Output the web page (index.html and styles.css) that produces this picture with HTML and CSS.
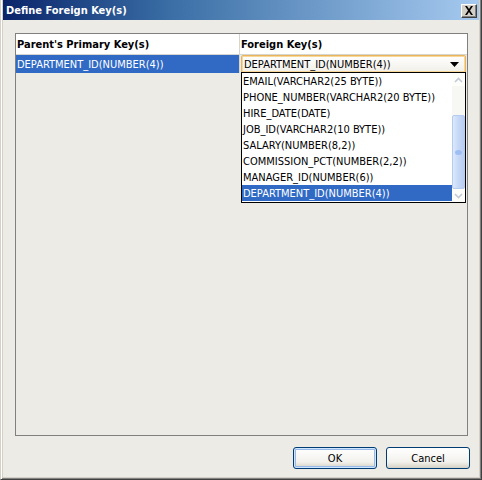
FILE: index.html
```html
<!DOCTYPE html>
<html>
<head>
<meta charset="utf-8">
<link rel="stylesheet" href="styles.css">
</head>
<body>
<div class="window">
  <div class="titlebar">
    <span class="title">Define Foreign Key(s)</span>
    <span class="close-btn"><svg width="10" height="9" viewBox="0 0 10 9"><path d="M1 0h2l2 3 2-3h2L6 4.5 9 9H7L5 6 3 9H1l3-4.5z" fill="#000"/></svg></span>
  </div>
  <div class="client">
    <div class="panel">
      <div class="grid-header">
        <div class="hcell c1">Parent's Primary Key(s)</div>
        <div class="hcell c2">Foreign Key(s)</div>
      </div>
      <div class="grid-row">
        <div class="cell c1 selected">DEPARTMENT_ID(NUMBER(4))</div>
        <div class="cell c2">
          <div class="combo">
            <span class="combo-text">DEPARTMENT_ID(NUMBER(4))</span>
            <svg class="combo-arrow" width="9" height="5" viewBox="0 0 9 5"><path d="M0 0h9L4.5 5z" fill="#000"/></svg>
          </div>
        </div>
      </div>
      <div class="dropdown">
        <ul class="items">
          <li>EMAIL(VARCHAR2(25 BYTE))</li>
          <li>PHONE_NUMBER(VARCHAR2(20 BYTE))</li>
          <li>HIRE_DATE(DATE)</li>
          <li>JOB_ID(VARCHAR2(10 BYTE))</li>
          <li>SALARY(NUMBER(8,2))</li>
          <li>COMMISSION_PCT(NUMBER(2,2))</li>
          <li>MANAGER_ID(NUMBER(6))</li>
          <li class="sel">DEPARTMENT_ID(NUMBER(4))</li>
        </ul>
        <div class="scrollbar">
          <div class="sb-btn"><svg width="9" height="6" viewBox="0 0 9 6"><path d="M1 5l3.5-3.5L8 5" stroke="#c3cbd8" stroke-width="1.6" fill="none"/></svg></div>
          <div class="sb-track">
            <div class="sb-thumb"><span class="grip"></span></div>
          </div>
          <div class="sb-btn"><svg width="9" height="6" viewBox="0 0 9 6"><path d="M1 1l3.5 3.5L8 1" stroke="#c3cbd8" stroke-width="1.6" fill="none"/></svg></div>
        </div>
      </div>
    </div>
    <div class="buttons">
      <button class="btn default">OK</button>
      <button class="btn">Cancel</button>
    </div>
  </div>
</div>
</body>
</html>
```
FILE: styles.css
```css
html, body {
  margin: 0;
  padding: 0;
  background: #ecebe6;
}
.window {
  width: 482px;
  height: 480px;
  box-sizing: border-box;
  display: flex;
  flex-direction: column;
  background: #d4d0c8;
  border-style: solid;
  border-width: 0 1px 1px 1px;
  border-color: #d4d0c8 #404040 #404040 #d4d0c8;
  padding: 0 2px 2px 2px;
  box-shadow: inset 1px 0 #ffffff, inset -1px -1px #808080;
  font-family: "DejaVu Sans Condensed", "DejaVu Sans", sans-serif;
  font-stretch: condensed;
  font-size: 11px;
  color: #000;
}
.titlebar {
  height: 20px;
  flex: none;
  display: flex;
  align-items: center;
  justify-content: space-between;
  background: linear-gradient(to right, #0a246a 0%, #3a6ea5 35%, #a6caf0 100%);
  padding: 0 2px 0 2px;
}
.title {
  color: #fff;
  font-weight: bold;
  font-size: 11px;
  padding-left: 1px;
  padding-top: 1px;
}
.close-btn {
  width: 16px;
  height: 14px;
  box-sizing: border-box;
  background: #d4d0c8;
  display: flex;
  align-items: center;
  justify-content: center;
  border: 1px solid;
  border-color: #ffffff #404040 #404040 #ffffff;
  box-shadow: inset -1px -1px #808080;
  margin-top: 1px;
}
.client {
  flex: 1;
  background: #ecebe6;
  display: flex;
  flex-direction: column;
  padding: 13px 9px 8px 12px;
}
.panel {
  position: relative;
  flex: 1;
  margin-right: 2px;
  border: 1px solid #808080;
  background: #ecebe6;
}
.grid-header {
  display: flex;
  height: 21px;
  background: #fff;
  border-bottom: 1px solid #d6d6d0;
  box-sizing: border-box;
}
.hcell {
  font-weight: bold;
  display: flex;
  align-items: center;
  padding-left: 1px;
  box-sizing: border-box;
}
.c1 {
  width: 224px;
  border-right: 1px solid #d6d6d0;
}
.c2 {
  flex: 1;
  border-right: none;
}
.grid-row {
  display: flex;
  height: 18px;
}
.cell {
  box-sizing: border-box;
  display: flex;
  align-items: center;
}
.cell.selected {
  background: #316ac5;
  color: #fff;
  padding-left: 1px;
}
.cell.c2 {
  padding: 0 1px 0 1px;
}
.combo {
  flex: 1;
  height: 18px;
  box-sizing: border-box;
  border: 1px solid #e9b45b;
  border-radius: 2px;
  box-shadow: inset 0 0 0 1px #f8d898;
  background: linear-gradient(#ffffff, #f1efe8);
  display: flex;
  align-items: center;
  justify-content: space-between;
  padding: 0 6px 0 2px;
}
.dropdown {
  position: absolute;
  left: 225px;
  top: 38px;
  width: 225px;
  height: 131px;
  box-sizing: border-box;
  border: 1px solid #000;
  background: #fff;
  display: flex;
}
.items {
  list-style: none;
  margin: 0;
  padding: 0;
  flex: 1;
}
.items li {
  height: 16px;
  line-height: 16px;
  padding-left: 1px;
  padding-top: 1px;
  box-sizing: border-box;
  white-space: nowrap;
}
.items li.sel {
  background: #316ac5;
  color: #fff;
}
.scrollbar {
  width: 13px;
  display: flex;
  flex-direction: column;
  background: #fdfdfa;
}
.sb-btn {
  height: 13px;
  display: flex;
  align-items: center;
  justify-content: center;
  background: #fdfdfa;
}
.sb-track {
  flex: 1;
  display: flex;
  flex-direction: column;
  justify-content: flex-end;
  background: #f7f7f4;
}
.sb-thumb {
  height: 74px;
  box-sizing: border-box;
  border: 1px solid #b6cbef;
  border-radius: 2px;
  background: linear-gradient(to right, #dce8fc, #c6d8f6 50%, #b8cdf3);
  display: flex;
  align-items: center;
  justify-content: center;
}
.grip {
  width: 7px;
  height: 5px;
  border-radius: 50%;
  background: #9ebef2;
}
.buttons {
  flex: none;
  display: flex;
  justify-content: flex-end;
  gap: 9px;
  padding-top: 11px;
}
.btn {
  width: 84px;
  height: 22px;
  box-sizing: border-box;
  font-family: "DejaVu Sans Condensed", "DejaVu Sans", sans-serif;
  font-stretch: condensed;
  font-size: 11px;
  color: #000;
  border: 1px solid #003c74;
  border-radius: 3px;
  background: linear-gradient(#ffffff, #f2f1ec 70%, #d6d0c5);
  padding: 0;
}
.btn.default {
  box-shadow: inset 0 0 0 1px #cee7ff, inset 0 0 0 2px #98b8ea;
}
```
